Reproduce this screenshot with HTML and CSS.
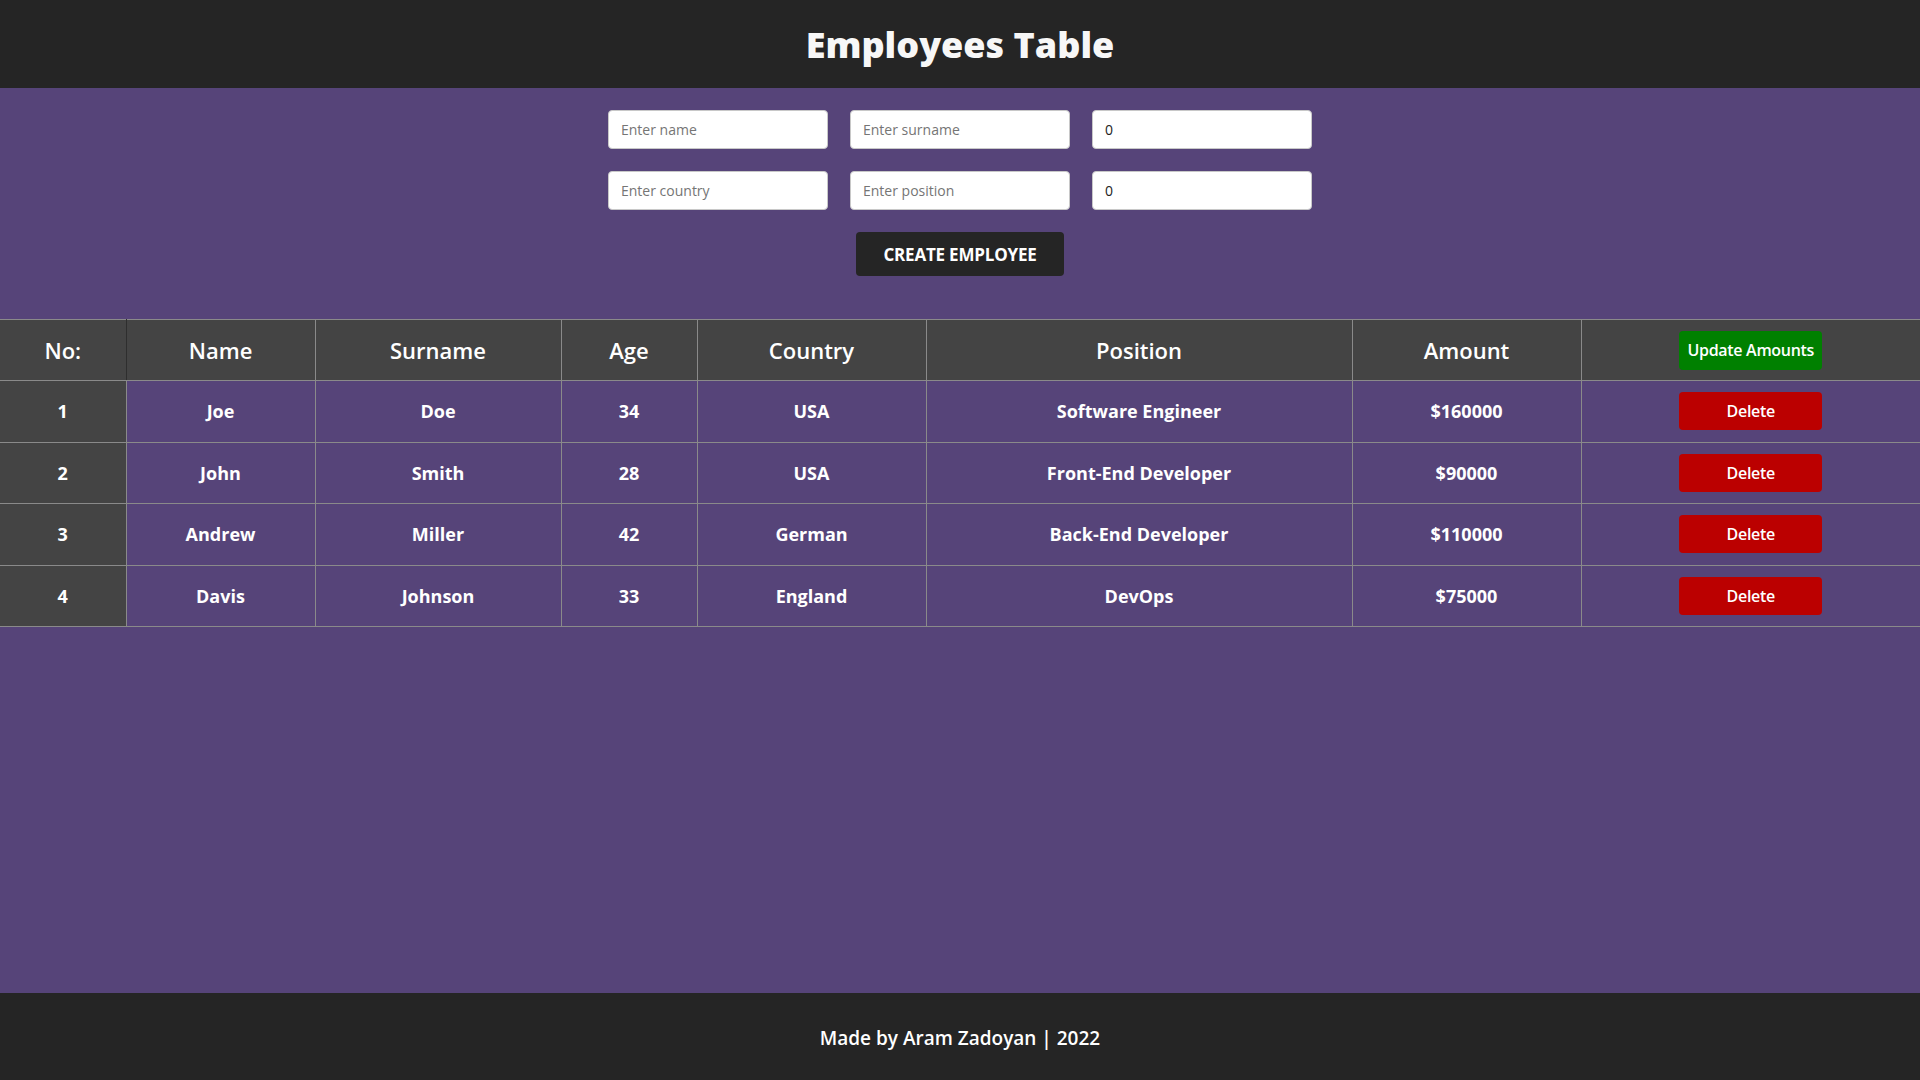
FILE: index.html
```html
<!DOCTYPE html>
<html lang="en">
<head>
<meta charset="utf-8">
<title>Employees Table</title>
<link rel="stylesheet" href="styles.css">
</head>
<body>
<header class="top">
  <h1 class="title">Employees Table</h1>
</header>
<main class="main">
  <form class="form">
    <div class="inputs">
      <input class="field" type="text" placeholder="Enter name">
      <input class="field" type="text" placeholder="Enter surname">
      <input class="field" type="number" value="0">
      <input class="field" type="text" placeholder="Enter country">
      <input class="field" type="text" placeholder="Enter position">
      <input class="field" type="number" value="0">
    </div>
    <button class="create" type="button">CREATE EMPLOYEE</button>
  </form>
  <table class="table">
    <colgroup>
      <col class="c1"><col class="c2"><col class="c3"><col class="c4"><col class="c5"><col class="c6"><col class="c7"><col class="c8">
    </colgroup>
    <thead>
      <tr>
        <th class="num">No:</th><th>Name</th><th>Surname</th><th>Age</th><th>Country</th><th>Position</th><th>Amount</th>
        <th><button class="btn update" type="button">Update Amounts</button></th>
      </tr>
    </thead>
    <tbody>
      <tr><td class="num">1</td><td>Joe</td><td>Doe</td><td>34</td><td>USA</td><td>Software Engineer</td><td>$160000</td><td><button class="btn delete" type="button">Delete</button></td></tr>
      <tr><td class="num">2</td><td>John</td><td>Smith</td><td>28</td><td>USA</td><td>Front-End Developer</td><td>$90000</td><td><button class="btn delete" type="button">Delete</button></td></tr>
      <tr><td class="num">3</td><td>Andrew</td><td>Miller</td><td>42</td><td>German</td><td>Back-End Developer</td><td>$110000</td><td><button class="btn delete" type="button">Delete</button></td></tr>
      <tr><td class="num">4</td><td>Davis</td><td>Johnson</td><td>33</td><td>England</td><td>DevOps</td><td>$75000</td><td><button class="btn delete" type="button">Delete</button></td></tr>
    </tbody>
  </table>
</main>
<footer class="foot">
  <p class="credit">Made by Aram Zadoyan | 2022</p>
</footer>
</body>
</html>
```
FILE: styles.css
```css
* { box-sizing: border-box; }
html, body { margin: 0; padding: 0; }
body {
  font-family: "Open Sans", "Noto Sans", "DejaVu Sans", sans-serif;
  color: #fff;
  height: 100vh;
  display: flex;
  flex-direction: column;
  background: #564479;
}
.top {
  background: #252525;
  height: 88px;
  display: flex;
  align-items: center;
  justify-content: center;
  flex-shrink: 0;
}
.title {
  margin: 0;
  font-size: 36px;
  font-weight: 800;
  color: #f7f7f7;
  line-height: 1;
  padding-top: 2px;
}
.main {
  flex: 1;
  background: #564479;
  padding-top: 22px;
}
.form {
  display: flex;
  flex-direction: column;
  align-items: center;
}
.inputs {
  display: grid;
  grid-template-columns: repeat(3, 220px);
  column-gap: 22px;
  row-gap: 22px;
}
.field {
  height: 39px;
  border: 1px solid #c8c8c8;
  border-radius: 4px;
  background: #fff;
  padding: 0 12px;
  font-family: "Open Sans", "Noto Sans", sans-serif;
  font-size: 14px;
  color: #222;
  outline: none;
}
.field::placeholder { color: #757575; }
.field::-webkit-outer-spin-button,
.field::-webkit-inner-spin-button { -webkit-appearance: none; margin: 0; }
.create {
  margin-top: 22px;
  width: 208px;
  height: 44px;
  background: #252525;
  color: #fff;
  border: none;
  border-radius: 4px;
  font-family: "Open Sans", "Noto Sans", sans-serif;
  font-size: 17px;
  font-weight: 700;
  letter-spacing: -0.2px;
}
.table {
  margin-top: 43px;
  width: 100%;
  border-collapse: collapse;
  table-layout: fixed;
  border-top: 1px solid #8a8a8a;
}
.c1 { width: 126px; }
.c2 { width: 189px; }
.c3 { width: 246px; }
.c4 { width: 136px; }
.c5 { width: 229px; }
.c6 { width: 426px; }
.c7 { width: 229px; }
.c8 { width: 339px; }
.table th, .table td {
  border: 1px solid #8a8a8a;
  text-align: center;
  vertical-align: middle;
  padding: 0;
}
.table th {
  height: 61px;
  background: #444;
  font-size: 22px;
  font-weight: 600;
}
.table td {
  height: 61.5px;
  font-size: 18px;
  font-weight: 700;
}
.table th:first-child, .table td:first-child { border-left: none; }
.table th:last-child, .table td:last-child { border-right: none; }
.table td.num { background: #444; }
.table th.num { border-right-color: #2e2e2e; }
.btn {
  width: 143px;
  border: none;
  border-radius: 4px;
  color: #fff;
  font-family: "Open Sans", "Noto Sans", sans-serif;
  font-weight: 600;
  font-size: 16px;
  letter-spacing: -0.3px;
}
.update { background: #008000; height: 39px; }
.delete { background: #bb0000; height: 38px; }
.foot {
  background: #252525;
  height: 87px;
  flex-shrink: 0;
  display: flex;
  align-items: center;
  justify-content: center;
}
.credit {
  margin: 0;
  font-size: 19px;
  font-weight: 600;
  padding-top: 2px;
}
```
